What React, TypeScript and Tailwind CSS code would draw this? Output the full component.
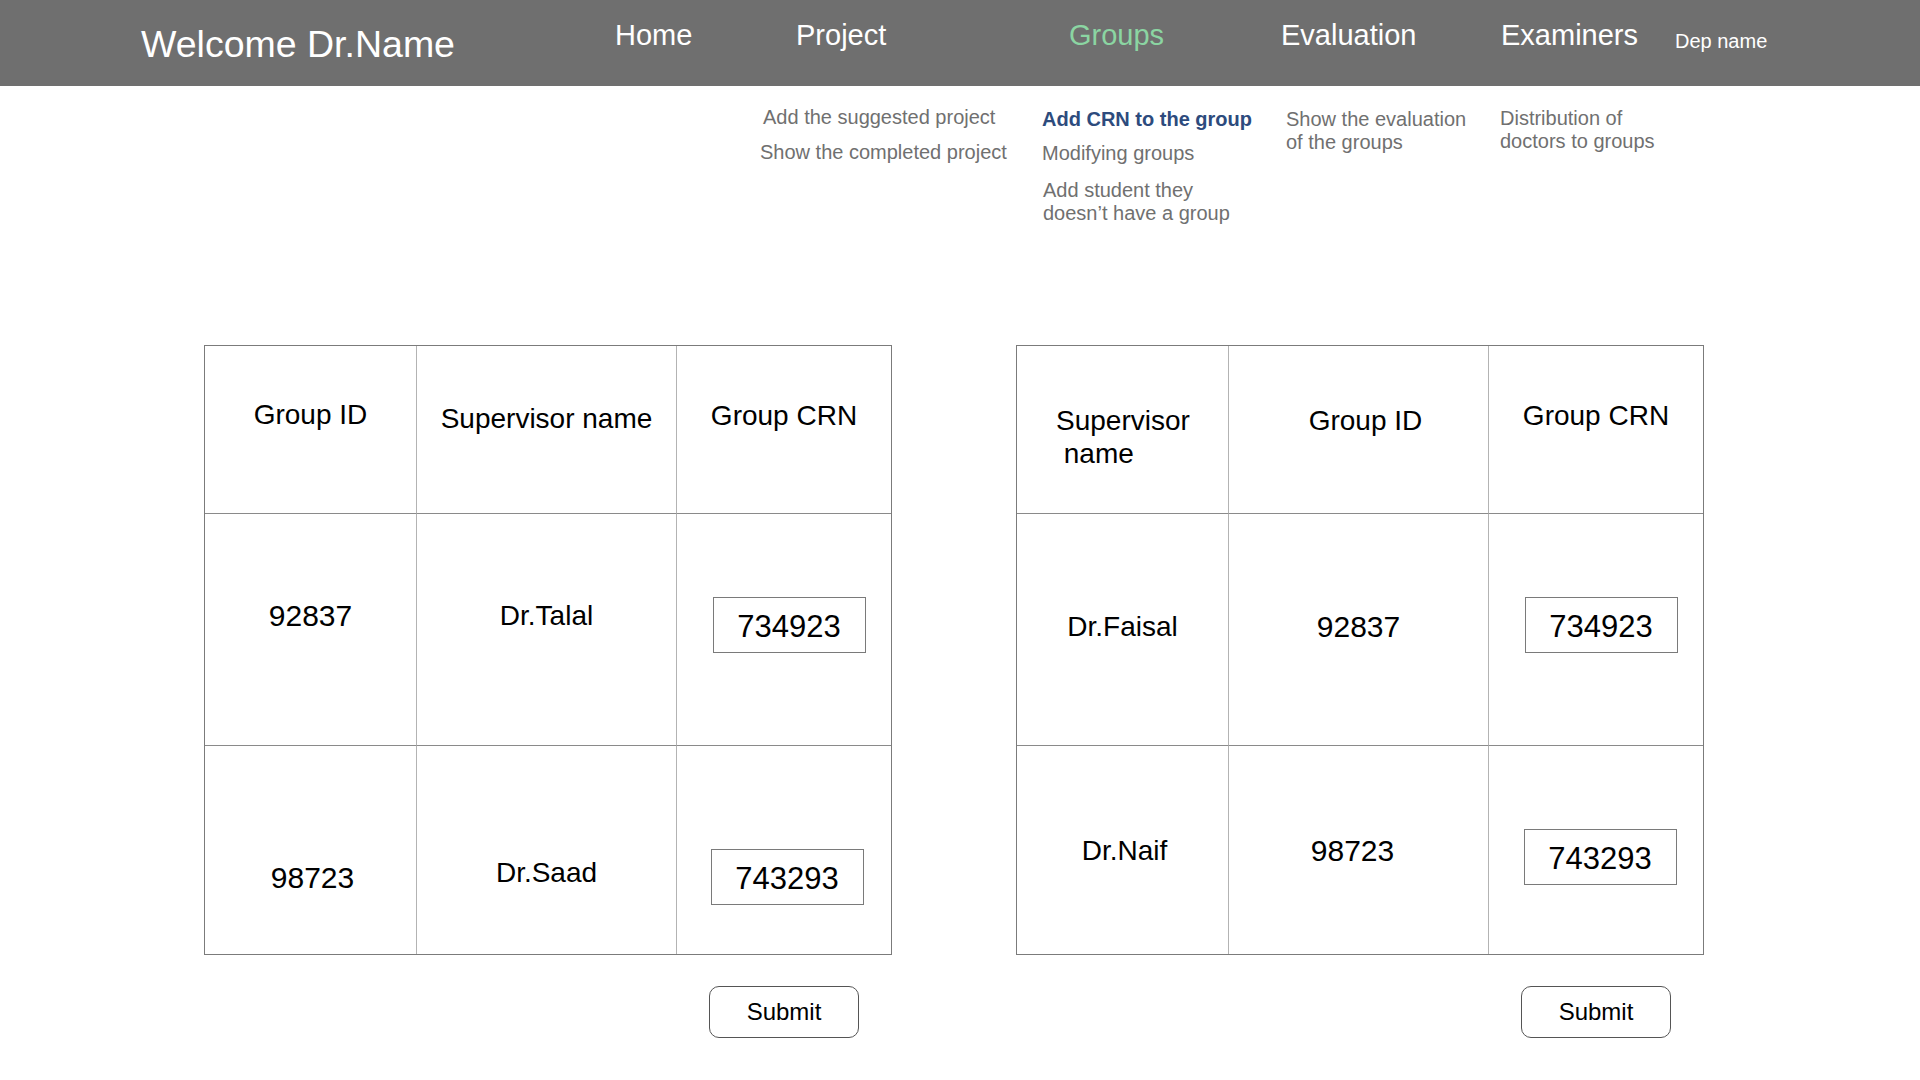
import clsx from 'clsx';

interface NavItem {
  label: string;
  width: string;
  active?: boolean;
}

interface Cell {
  text: string;
  pad: string;
  size: string;
  crn?: boolean;
  extra?: string;
}

const navItems: NavItem[] = [
  { label: 'Home', width: 'w-[181px]' },
  { label: 'Project', width: 'w-[273px]' },
  { label: 'Groups', width: 'w-[212px]', active: true },
  { label: 'Evaluation', width: 'w-[220px]' },
  { label: 'Examiners', width: 'w-[174px]' },
];

const HEAD = 'text-[28px] leading-[34px]';
const NAME = 'text-[28px] leading-[34px]';
const NUM = 'text-[30px] leading-[36px]';

const leftRows: Cell[][] = [
  [
    { text: 'Group ID', pad: 'pt-[52px]', size: HEAD },
    { text: 'Supervisor name', pad: 'pt-[56px]', size: HEAD },
    { text: 'Group CRN', pad: 'pt-[53px]', size: HEAD },
  ],
  [
    { text: '92837', pad: 'pt-[84px]', size: NUM },
    { text: 'Dr.Talal', pad: 'pt-[85px]', size: NAME },
    { text: '734923', pad: 'pt-[83px]', size: NUM, crn: true, extra: 'pl-[10px]' },
  ],
  [
    { text: '98723', pad: 'pt-[114px]', size: NUM, extra: 'pl-[4px]' },
    { text: 'Dr.Saad', pad: 'pt-[110px]', size: NAME },
    { text: '743293', pad: 'pt-[103px]', size: NUM, crn: true, extra: 'pl-[6px]' },
  ],
];

const rightRows: Cell[][] = [
  [
    { text: 'Supervisor\n name', pad: 'pt-[58px]', size: 'text-[28px] leading-[33px]', extra: 'items-start pl-[39px] whitespace-pre' },
    { text: 'Group ID', pad: 'pt-[58px]', size: HEAD, extra: 'pl-[14px]' },
    { text: 'Group CRN', pad: 'pt-[53px]', size: HEAD },
  ],
  [
    { text: 'Dr.Faisal', pad: 'pt-[96px]', size: NAME },
    { text: '92837', pad: 'pt-[95px]', size: NUM },
    { text: '734923', pad: 'pt-[83px]', size: NUM, crn: true, extra: 'pl-[10px]' },
  ],
  [
    { text: 'Dr.Naif', pad: 'pt-[88px]', size: NAME, extra: 'pl-[4px]' },
    { text: '98723', pad: 'pt-[87px]', size: NUM, extra: 'pr-[12px]' },
    { text: '743293', pad: 'pt-[83px]', size: NUM, crn: true, extra: 'pl-[8px]' },
  ],
];

const rowHeights = ['h-[168px]', 'h-[232px]', 'h-[208px]'];

function CrnTable({ rows }: { rows: Cell[][] }) {
  return (
    <div className="w-[688px]">
      <div className="grid grid-cols-[212px_260px_214px] border border-[#7b7b7b]">
        {rows.map((row, r) =>
          row.map((cell, c) => (
            <div
              key={`${r}-${c}`}
              className={clsx(
                'flex flex-col items-center text-black',
                rowHeights[r],
                cell.pad,
                cell.extra,
                c < 2 && 'border-r border-r-[#b3b3b3]',
                r < 2 && 'border-b border-b-[#8a8a8a]'
              )}
            >
              {cell.crn ? (
                <div className="flex h-[56px] w-[153px] items-center justify-center border border-[#7a7a7a] pt-[2px] text-[31px] leading-none">
                  {cell.text}
                </div>
              ) : (
                <p className={cell.size}>{cell.text}</p>
              )}
            </div>
          ))
        )}
      </div>
      <div className="mt-[31px] flex justify-end pr-[33px]">
        <button className="h-[52px] w-[150px] rounded-[10px] border border-[#555555] text-[24px] text-black">
          Submit
        </button>
      </div>
    </div>
  );
}

export default function App() {
  return (
    <div className="min-h-screen w-[1920px] bg-white font-['Liberation_Sans',Arial,sans-serif]">
      <header className="flex h-[86px] bg-[#6f6f6f] pl-[141px] text-white">
        <div className="mt-[26px] w-[474px] text-[37.5px] leading-none">Welcome Dr.Name</div>
        {navItems.map((item) => (
          <div
            key={item.label}
            className={clsx(
              'mt-[21px] text-[29px] leading-none',
              item.width,
              item.active ? 'text-[#8bd5a2]' : 'text-white'
            )}
          >
            {item.label}
          </div>
        ))}
        <div className="mt-[31px] text-[20px] leading-none">Dep name</div>
      </header>

      <section className="flex h-[259px] pl-[760px] text-[20px] leading-[23px] text-[#707070]">
        <div className="flex w-[282px] flex-col gap-[12px] pt-[20px]">
          <p className="pl-[3px]">Add the suggested project</p>
          <p>Show the completed project</p>
        </div>
        <div className="flex w-[244px] flex-col pt-[22px]">
          <p className="font-bold text-[#2d4b7d]">Add CRN to the group</p>
          <p className="mt-[11px]">Modifying groups</p>
          <p className="mt-[14px] pl-px">
            Add student they
            <br />
            doesn’t have a group
          </p>
        </div>
        <div className="w-[214px] pt-[22px]">
          Show the evaluation
          <br />
          of the groups
        </div>
        <div className="pt-[21px]">
          Distribution of
          <br />
          doctors to groups
        </div>
      </section>

      <main className="flex gap-[124px] pl-[204px]">
        <CrnTable rows={leftRows} />
        <CrnTable rows={rightRows} />
      </main>
    </div>
  );
}
